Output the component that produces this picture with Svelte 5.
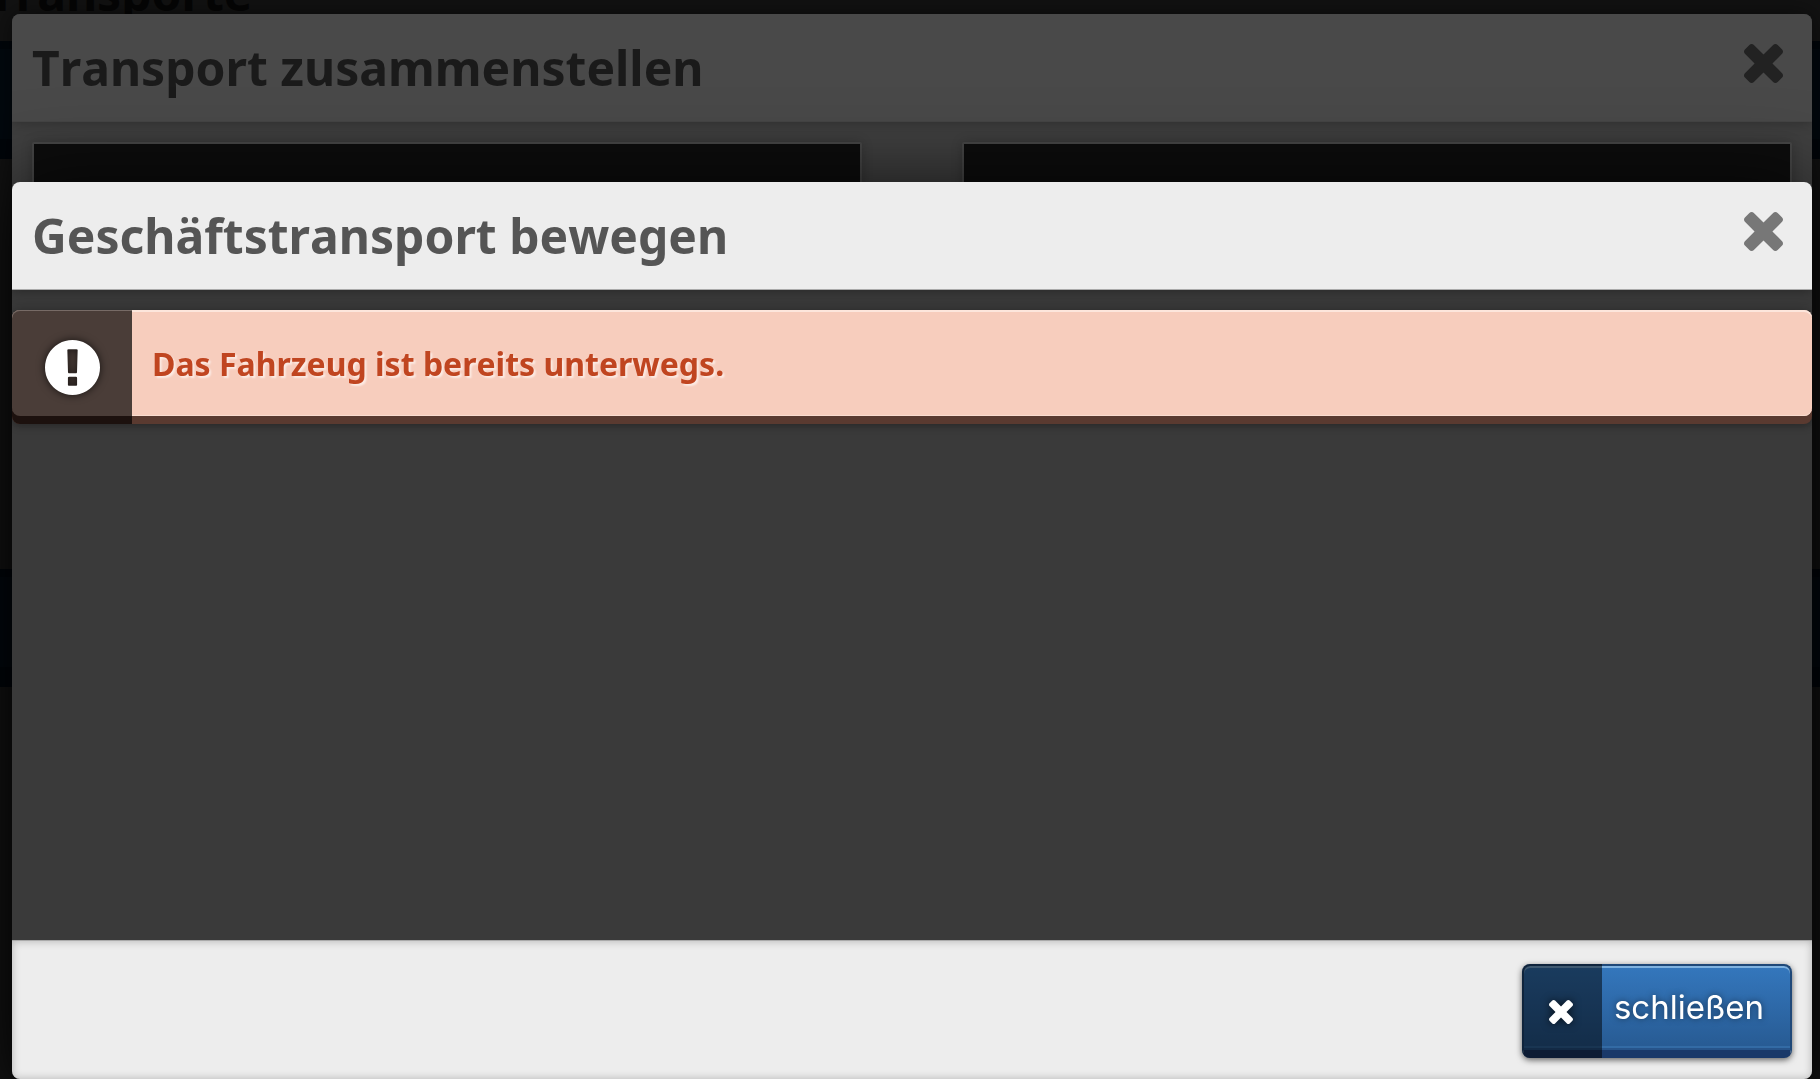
<script lang="ts">
  interface Panel {
    id: string;
  }

  const pageTitle = 'Transporte';
  const backTitle = 'Transport zusammenstellen';
  const frontTitle = 'Geschäftstransport bewegen';
  const message = 'Das Fahrzeug ist bereits unterwegs.';

  const panels: Panel[] = [{ id: 'left' }, { id: 'right' }];

  let open = $state(true);

  function close(): void {
    open = false;
  }
</script>

{#snippet cross()}
  <svg class="cross" viewBox="302 366 1188 1188" aria-hidden="true">
    <path
      d="M1490 1322q0 40-28 68l-136 136q-28 28-68 28t-68-28l-294-294-294 294q-28 28-68 28t-68-28l-136-136q-28-28-28-68t28-68l294-294-294-294q-28-28-28-68t28-68l136-136q28-28 68-28t68 28l294 294 294-294q28-28 68-28t68 28l136 136q28 28 28 68t-28 68l-294 294 294 294q28 28 28 68z"
    />
  </svg>
{/snippet}

<div class="page">
  <h1 class="page__title">{pageTitle}</h1>
  <div class="page__bar"></div>
  <div class="page__bar page__bar--second"></div>
</div>

<section class="modal modal--back" aria-label={backTitle}>
  <header class="modal__header">
    <h2>{backTitle}</h2>
    <button class="modal__close" type="button" aria-label="Schließen" disabled>
      {@render cross()}
    </button>
  </header>
  <div class="modal__panels">
    {#each panels as panel (panel.id)}
      <div class="panel"></div>
    {/each}
  </div>
</section>

{#if open}
  <div class="modal modal--front" role="dialog" aria-modal="true" aria-labelledby="front-title">
    <header class="modal__header">
      <h2 id="front-title">{frontTitle}</h2>
      <button class="modal__close" type="button" aria-label="Schließen" onclick={close}>
        {@render cross()}
      </button>
    </header>

    <div class="modal__body">
      <div class="alert" role="alert">
        <div class="alert__icon">
          <svg viewBox="128 128 1536 1536" aria-hidden="true">
            <path
              d="M896 128q209 0 385.5 103t279.5 279.5 103 385.5-103 385.5-279.5 279.5-385.5 103-385.5-103-279.5-279.5-103-385.5 103-385.5 279.5-279.5 385.5-103zm128 1247v-190q0-14-9-23.5t-22-9.5h-192q-13 0-23 10t-10 23v190q0 13 10 23t23 10h192q13 0 22-9.5t9-23.5zm-2-344l18-621q0-12-10-18-10-8-24-8h-220q-14 0-24 8-10 6-10 18l18 621q0 10 10 17.5t24 7.5h185q14 0 23.5-7.5t10.5-17.5z"
            />
          </svg>
        </div>
        <p class="alert__text">{message}</p>
      </div>
    </div>

    <footer class="modal__footer">
      <button class="action" type="button" onclick={close}>
        <span class="action__icon">{@render cross()}</span>
        <span class="action__label">schließen</span>
      </button>
    </footer>
  </div>
{/if}

<style>
  :global(body) {
    margin: 0;
    background: #0f0f0f;
    font-family: 'Noto Sans', 'Open Sans', sans-serif;
    font-kerning: none;
    overflow: hidden;
  }

  h1,
  h2,
  p {
    margin: 0;
  }

  button {
    margin: 0;
    padding: 0;
    border: 0;
    background: none;
    font: inherit;
    cursor: pointer;
  }

  .cross {
    display: block;
    fill: currentColor;
  }

  /* page underneath both dialogs */
  .page {
    height: 100vh;
    overflow: hidden;
    background: #121212;
  }

  .page__title {
    margin: -40px 0 15px -12px;
    font-size: 48px;
    line-height: 66px;
    font-weight: 700;
    color: #050505;
  }

  .page__bar {
    box-sizing: border-box;
    height: 118px;
    background: #02080e;
    border: solid #01050a;
    border-width: 8px 0 20px;
  }

  .page__bar--second {
    margin-top: 410px;
  }

  .modal {
    position: fixed;
    right: 8px;
    bottom: 0;
    left: 12px;
    display: flex;
    flex-direction: column;
    border-radius: 8px;
    overflow: hidden;
  }

  .modal--back {
    top: 14px;
    background: #404040;
    color: #1a1a1a;
    box-shadow: 0 0 24px rgba(0, 0, 0, 0.5);
  }

  .modal--front {
    top: 182px;
    background: #3a3a3a;
    color: #555;
    box-shadow: 0 0 80px rgba(0, 0, 0, 0.7);
  }

  .modal__header {
    box-sizing: border-box;
    display: flex;
    flex: none;
    align-items: flex-start;
    justify-content: space-between;
    height: 108px;
    padding: 21px 29px 0 20px;
    border-bottom: 1px solid #aaa;
    background: #ededed;
    box-shadow: 0 0 12px rgba(0, 0, 0, 0.4);
  }

  .modal--back .modal__header {
    border-bottom-color: #454545;
    background: #494949;
    box-shadow: 0 0 12px rgba(0, 0, 0, 0.3);
  }

  .modal__header h2 {
    font-size: 48px;
    line-height: 66px;
    font-weight: 700;
  }

  .modal__close {
    margin-top: 9px;
    color: #777;
  }

  .modal--back .modal__close {
    color: #222;
  }

  .modal__close .cross {
    width: 39px;
    height: 39px;
  }

  .modal__panels {
    display: flex;
    flex: 1;
    gap: 100px;
    padding: 20px;
  }

  .panel {
    flex: 1;
    border: 2px solid #474747;
    border-radius: 2px;
    background: #0d0d0d;
    box-shadow: 0 0 12px rgba(0, 0, 0, 0.2);
  }

  .modal__body {
    flex: 1;
    padding-top: 20px;
  }

  .alert {
    display: flex;
    height: 106px;
    margin-bottom: 8px;
    border-radius: 8px;
    background: #f7cdbd;
    box-shadow:
      0 8px 0 #5a3a30,
      0 0 12px rgba(0, 0, 0, 0.3),
      0 10px 8px rgba(0, 0, 0, 0.3);
  }

  .alert__icon {
    display: flex;
    flex: none;
    align-items: center;
    justify-content: center;
    width: 120px;
    border-radius: 8px 0 0 8px;
    background: #4a3d38;
    box-shadow:
      inset 0 1px 0 #776b66,
      0 8px 0 #1c110e;
  }

  .alert__icon svg {
    width: 55px;
    height: 55px;
    margin-top: 8px;
    fill: #fff;
    filter: drop-shadow(0 0 4px rgba(0, 0, 0, 0.7));
  }

  .alert__text {
    flex: 1;
    padding: 32px 20px 0;
    border-radius: 0 8px 8px 0;
    box-shadow:
      inset 0 2px 0 #fde6dc,
      inset 0 -1px 0 #fadccf;
    font-size: 32px;
    line-height: 44px;
    font-weight: 700;
    color: #c04520;
    text-shadow: 2px 2px 2px rgba(255, 255, 255, 0.6);
  }

  .modal__footer {
    display: flex;
    flex: none;
    justify-content: flex-end;
    padding: 23px 20px 21px;
    border-top: 1px solid #aaa;
    background: #ededed;
    box-shadow: inset 0 0 8px rgba(0, 0, 0, 0.25);
  }

  .action {
    box-sizing: border-box;
    display: flex;
    height: 94px;
    border: solid #1f4878;
    border-width: 2px 2px 8px;
    border-bottom-color: #1a3969;
    border-radius: 8px;
    background: #1a3969 linear-gradient(#3477bd, #275a92) padding-box;
    box-shadow:
      inset 0 2px 0 #7fb2e0,
      inset 0 -2px 0 #27548a,
      inset 0 -4px 0 #336ba5,
      0 2px 6px rgba(0, 0, 0, 0.6);
    color: #fff;
  }

  /* darkens the button's left end, its border included */
  .action__icon {
    display: flex;
    align-items: center;
    justify-content: center;
    width: 80px;
    margin: -2px 0 -8px -2px;
    border-radius: 8px 0 0 8px;
    background: rgba(0, 0, 0, 0.5);
  }

  .action__icon .cross {
    width: 24px;
    height: 24px;
    margin-top: 2px;
    margin-right: 2px;
    filter: drop-shadow(0 0 4px rgba(0, 0, 0, 0.7));
  }

  .action__label {
    padding: 20px 26px 0 12px;
    font-family: Inter, Roboto, sans-serif;
    font-size: 33px;
    line-height: 42px;
    text-shadow: 0 0 6px rgba(0, 0, 0, 0.5);
  }
</style>
